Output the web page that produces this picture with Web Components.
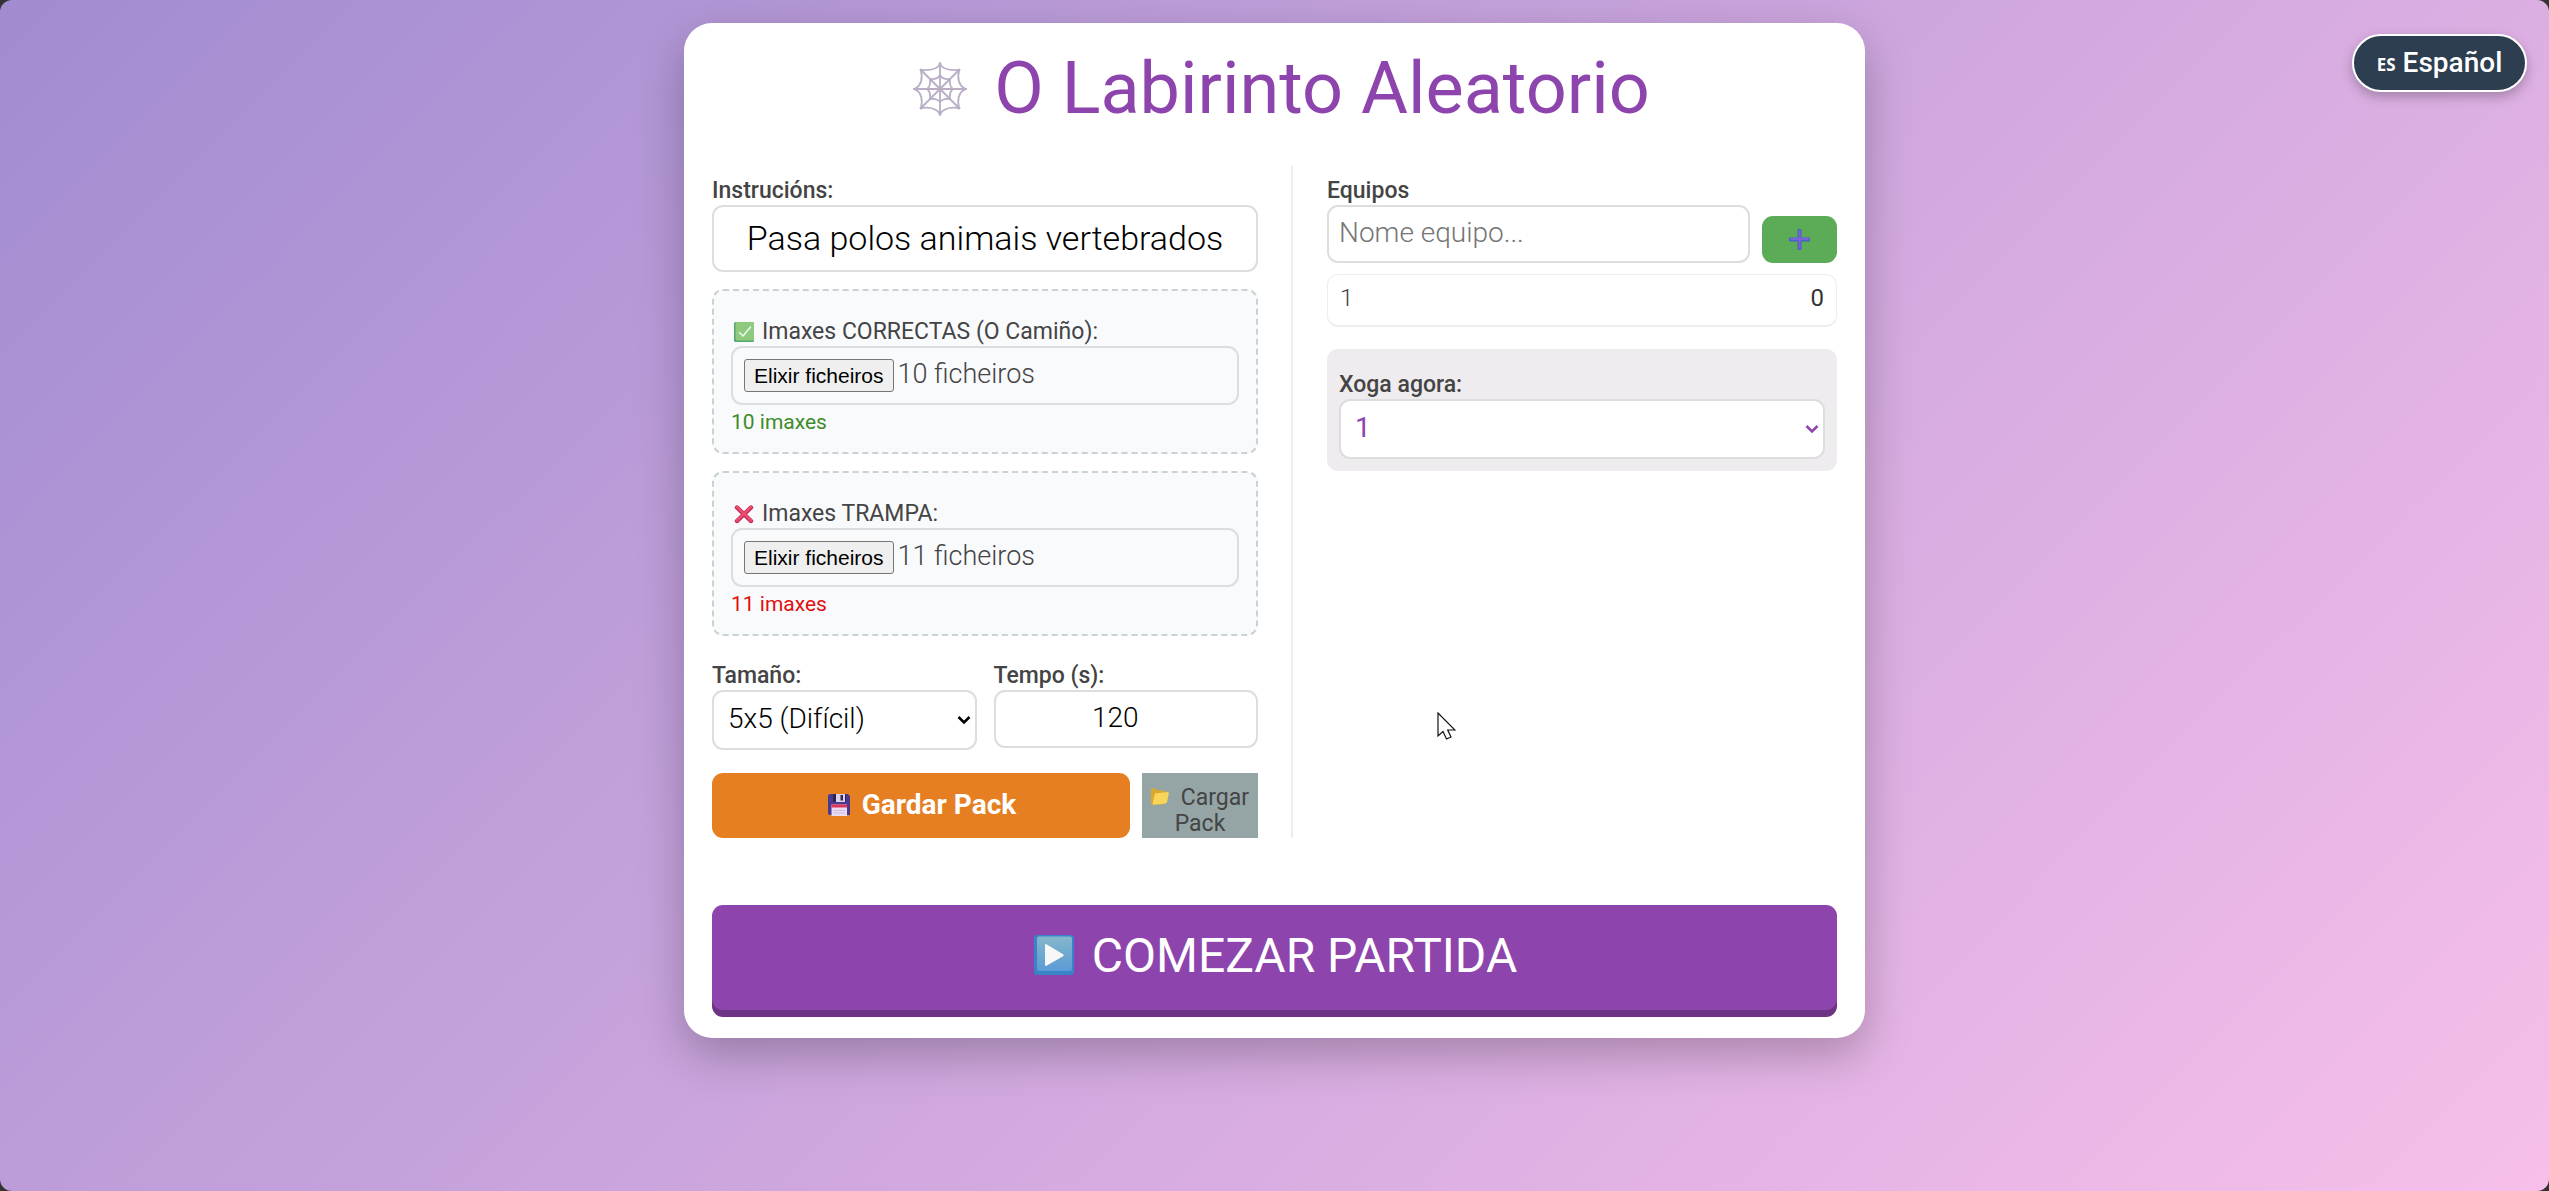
<!DOCTYPE html>
<html lang="gl">
<head>
<meta charset="utf-8">
<meta name="viewport" content="width=device-width, initial-scale=1">
<title>O Labirinto Aleatorio</title>
<style>
  html { background: #333; }
  body { margin: 0; color: #444; font-family: Roboto, "Liberation Sans", sans-serif; font-size: 24px; line-height: 28px; }
</style>
</head>
<body>
<maze-app></maze-app>
<script>
const base = `
  *, *::before, *::after { box-sizing: border-box; }
  button, input, select { font-family: inherit; margin: 0; }
  svg { display: block; flex: none; }
`;
const define = (name, html, setup) => customElements.define(name, class extends HTMLElement {
  constructor() {
    super();
    const t = document.createElement('template');
    t.innerHTML = html(this);
    this.attachShadow({ mode: 'open' }).append(t.content.cloneNode(true));
    if (setup) setup(this.shadowRoot, this);
  }
});

const icons = {
  web: ['-14 0 68 54', `<g fill="none" stroke="#b9aec6" stroke-width="1.8" stroke-linecap="round" stroke-linejoin="round">
    <path d="M27 1V53M1 27H53M8 8L46 46M46 8L8 46"/>
    <path d="M27 2Q24 9 8 8Q11 22 2 27Q11 32 8 46Q22 44 27 52Q32 44 46 46Q43 32 52 27Q43 22 46 8Q30 9 27 2Z"/>
    <path d="M27 13Q24 18 17 17Q18 24 14 27Q18 30 17 37Q24 36 27 40Q30 36 37 37Q36 30 40 27Q36 24 37 17Q30 18 27 13Z"/></g>
    <g fill="#b9aec6"><circle cx="27" cy="27" r="2.4"/><circle cx="27" cy="2" r="1.5"/><circle cx="27" cy="52" r="1.5"/><circle cx="2" cy="27" r="1.5"/><circle cx="52" cy="27" r="1.5"/><circle cx="8" cy="8" r="1.5"/><circle cx="46" cy="8" r="1.5"/><circle cx="8" cy="46" r="1.5"/><circle cx="46" cy="46" r="1.5"/></g>`],
  check: ['0 0 20 20', `<rect width="20" height="20" rx="1.5" fill="#4fa872"/><rect x="1.5" width="18.5" height="18.5" rx="1" fill="#8fca7c"/><path d="M5.5 10.5L9 14L16.5 5" fill="none" stroke="#e6fbf0" stroke-width="1.6" stroke-linecap="round" stroke-linejoin="round"/>`],
  cross: ['0 0 20 20', `<path d="M3 3.5L17 17M17 3.5L3 17" stroke="#c2245c" stroke-width="4.4" stroke-linecap="round"/><path d="M3 3L17 16.5M17 3L3 16.5" stroke="#ea4d6e" stroke-width="2.6" stroke-linecap="round"/>`],
  floppy: ['0 0 22 22', `<path d="M2 0H20L22 2V21H1L0 19V1Z" fill="#4a3a92"/><path d="M5 0H18V8H5Z" fill="#2c2550"/><rect x="8" width="9" height="8" fill="#dcd3ea"/><rect x="12.5" y="1" width="2.5" height="5.5" fill="#33285f"/><rect x="3.5" y="10.5" width="15.5" height="11.5" fill="#e9dcf3"/><rect x="3.5" y="10.5" width="15.5" height="3" fill="#df3658"/><path d="M5.5 16.5H17M5.5 19H17" stroke="#cbbadb"/>`],
  folder: ['0 0 18 17', `<path d="M0 2Q0 .5 1.5.5H5L7 2.5H13Q14.5 2.5 14.5 4V15L12 16.5H1.5Q0 16.5 0 15Z" fill="#dca92f"/><path d="M4 5.5L16.5 4Q18 4 17.8 5.5L16 14Q15.7 15.2 14.5 15.4L3 16.8Q1.500 17 1.700 15.500Z" fill="#f8d65a"/>`],
  plus: ['0 0 21 21', `<path d="M10.500 1.500V20M1.500 10.500H20" stroke="#4b5fc9" stroke-width="4" stroke-linecap="round"/><path d="M10.500 2V19M2 10H19" stroke="#7b62d8" stroke-width="2" stroke-linecap="round"/>`],
  play: ['0 0 40 40', `<defs><linearGradient id="g" x2="0" y2="1"><stop stop-color="#83b7cb"/><stop offset="1" stop-color="#5b9bd6"/></linearGradient></defs><rect width="40" height="40" rx="3" fill="#3a83c9"/><rect x="3" y="1.500" width="35" height="34.500" rx="2" fill="url(#g)"/><path d="M11 9.500V30.500L12 31L29.500 21V19.500L12 9Z" fill="#f7f7f7"/>`],
  chevron: ['0 0 14 10', `<path d="M1.500 2L7 7.500L12.500 2" fill="none" stroke="currentColor" stroke-width="2.600"/>`],
  cursor: ['0 0 19 28', `<path d="M1 1V24L6 19.500L9.500 27L14 25L10.700 18H18Z" fill="#fff" stroke="#111" stroke-width="1.200"/>`]
};
define('ui-icon', el => {
  const [vb, body] = icons[el.getAttribute('name')];
  const [, , w, h] = vb.split(' ');
  return `<style>:host{display:inline-block;flex:none}svg{display:block}</style><svg width="${w}" height="${h}" viewBox="${vb}" aria-hidden="true">${body}</svg>`;
});

const box = `border: 2px solid #ddd; border-radius: 11px; background: #fff; width: 100%; display: block; font-weight: 300; color: #000;`;
const lab = `label { display: flex; align-items: center; gap: 8px; font-size: 23px; line-height: 28px; font-weight: 500; color: #444; }`;

define('text-field', el => `<style>${base}${lab}
  :host { display: block; min-width: 0; }
  input { ${box} height: 58px; padding: 0 10px 4px; font-size: 28px; }
  input::placeholder { color: #757575; opacity: 1; }
  :host([big]) input { height: 67px; padding: 0 16px 2px; font-size: 34px; text-align: center; }
  input[type=number] { text-align: center; padding-right: 31px; appearance: textfield; }
  input::-webkit-inner-spin-button { appearance: none; }
</style><label for="f">${el.getAttribute('label')}</label>
<input id="f" type="${el.getAttribute('type') || 'text'}" value="${el.getAttribute('value') || ''}" placeholder="${el.getAttribute('placeholder') || ''}">`);

define('select-field', el => `<style>${base}${lab}
  :host { display: block; min-width: 0; color: #000; font-weight: 300; }
  .wrap { display: grid; align-items: center; }
  select { ${box} grid-area: 1 / 1; height: 60px; padding: 0 36px 4px 14px; font-size: 28px; appearance: none; color: inherit; font-weight: inherit; }
  ui-icon { grid-area: 1 / 1; justify-self: end; padding-right: 6px; pointer-events: none; }
  :host([accent]) { color: #8e44ad; font-weight: 400; }
</style><label for="s">${el.getAttribute('label')}</label>
<div class="wrap"><select id="s"><option>${el.getAttribute('value')}</option></select><ui-icon name="chevron"></ui-icon></div>`);

define('file-box', el => `<style>${base}${lab}
  :host { display: block; padding: 27px 17px 16px; border: 2px dashed #c9d3d6; border-radius: 11px; background: #f9fafc; }
  label { padding-left: 3px; font-weight: 400; }
  .file { display: flex; align-items: center; gap: 4px; height: 59px; padding: 0 11px; border: 2px solid #ddd; border-radius: 11px; font-size: 27px; font-weight: 300; }
  .file span { padding-bottom: 3px; }
  button { height: 33px; padding: 0 9px; border: 1px solid #767676; border-radius: 3px; background: #efefef; color: #000; font: 21px "Liberation Sans", sans-serif; }
  .count { font-size: 21px; line-height: 28px; padding-top: 3px; color: ${el.getAttribute('tone')}; }
</style><label for="b"><ui-icon name="${el.getAttribute('icon')}"></ui-icon><slot></slot></label>
<div class="file"><input type="file" multiple hidden><button id="b" type="button">Elixir ficheiros</button><span>${el.getAttribute('count')} ficheiros</span></div>
<div class="count">${el.getAttribute('count')} imaxes</div>`,
root => root.querySelector('button').addEventListener('click', () => root.querySelector('input').click()));

define('pack-actions', () => `<style>${base}
  :host { display: flex; gap: 12px; height: 65px; }
  button { flex: 1; display: flex; align-items: center; justify-content: center; gap: 12px; padding: 0 4px 2px 6px; border: 0; border-radius: 11px; background: #e67e22; color: #fff; font-size: 28px; font-weight: 700; }
  label { width: 116px; background: #95a5a6; color: #444; font-size: 23px; line-height: 26px; font-weight: 400; text-align: center; padding-top: 12px; }
  label ui-icon { margin-right: 6px; }
</style><button type="button"><ui-icon name="floppy"></ui-icon>Gardar Pack</button>
<label for="p"><ui-icon name="folder"></ui-icon> Cargar Pack</label><input id="p" type="file" hidden>`);

define('team-panel', () => `<style>${base}
  :host { display: block; }
  .add { display: flex; align-items: end; gap: 12px; }
  text-field { flex: 1; }
  .add button { width: 75px; height: 47px; border: 0; border-radius: 11px; background: #5cab57; display: grid; place-items: center; }
  ul { list-style: none; margin: 11px 0 22px; padding: 0; }
  li { display: flex; justify-content: space-between; align-items: center; height: 53px; padding: 0 12px 4px; border: 1px solid #eee; border-bottom-width: 2px; border-radius: 11px; font-weight: 300; }
  b { font-weight: 400; color: #333; }
  .turn { padding: 22px 12px 12px; border-radius: 11px; background: #eeecee; }
</style>
<div class="add"><text-field label="Equipos" placeholder="Nome equipo..."></text-field><button type="button" aria-label="+"><ui-icon name="plus"></ui-icon></button></div>
<ul><li><span>1</span><b>0</b></li></ul>
<div class="turn"><select-field accent label="Xoga agora:" value="1"></select-field></div>`);

define('language-button', () => `<style>${base}
  :host { display: block; }
  button { display: flex; align-items: center; justify-content: center; gap: 7px; width: 175px; height: 58px; padding: 0 6px 2px; border: 2px solid #fff; border-radius: 29px; background: #2c3e50; color: #fff; font-size: 28px; font-weight: 500; box-shadow: 0 5px 12px rgba(0,0,0,.25); }
  small { font: 700 17px "Open Sans", sans-serif; padding-top: 4px; }
</style><button type="button"><small>ES</small>Español</button>`);

define('maze-card', () => `<style>${base}
  :host { display: block; width: 100%; max-width: 1181px; margin: 0 auto; padding: 28px; border-radius: 28px; background: #fff; box-shadow: 0 17px 46px rgba(0,0,0,.25); }
  h1 { display: flex; align-items: center; justify-content: center; gap: 27px; margin: 0 0 39px; font-size: 72px; line-height: 76px; font-weight: 400; color: #8e44ad; }
  .cols { display: grid; grid-template-columns: 581fr 510fr; gap: 34px; }
  .left { border-right: 2px solid #eee; padding: 11px 33px 0 0; }
  .stack { display: grid; gap: 17px; }
  .right { padding-top: 11px; }
  .pair { display: grid; grid-template-columns: 1fr 1fr; gap: 17px; margin: 26px 0 23px; }
  .start { display: flex; align-items: center; justify-content: center; gap: 18px; width: 100%; height: 105px; margin-top: 67px; padding: 0 4px 5px 6px; border: 0; border-radius: 11px; background: #8e44ad; color: #fff; font-size: 48px; box-shadow: 0 7px 0 #6c3483; }
</style>
<h1><ui-icon name="web"></ui-icon>O Labirinto Aleatorio</h1>
<div class="cols">
  <div class="left">
    <div class="stack">
      <text-field big label="Instrucións:" value="Pasa polos animais vertebrados"></text-field>
      <file-box icon="check" tone="#3d8c28" count="10">Imaxes CORRECTAS (O Camiño):</file-box>
      <file-box icon="cross" tone="#e01010" count="11">Imaxes TRAMPA:</file-box>
    </div>
    <div class="pair">
      <select-field label="Tamaño:" value="5x5 (Difícil)"></select-field>
      <text-field type="number" label="Tempo (s):" value="120"></text-field>
    </div>
    <pack-actions></pack-actions>
  </div>
  <div class="right"><team-panel></team-panel></div>
</div>
<button class="start" type="button"><ui-icon name="play"></ui-icon>COMEZAR PARTIDA</button>`);

define('maze-app', () => `<style>${base}
  :host { display: block; box-sizing: border-box; position: relative; min-height: 100vh; padding: 23px 24px; border-radius: 12px; background: linear-gradient(135deg, #a18cd1 0%, #f7bfea 100%); }
  maze-card { box-sizing: border-box; }
  language-button { position: absolute; top: 34px; right: 22px; }
  .pointer { position: absolute; left: 1437px; top: 712px; pointer-events: none; }
</style><maze-card></maze-card><language-button></language-button><ui-icon class="pointer" name="cursor"></ui-icon>`);
</script>
</body>
</html>
